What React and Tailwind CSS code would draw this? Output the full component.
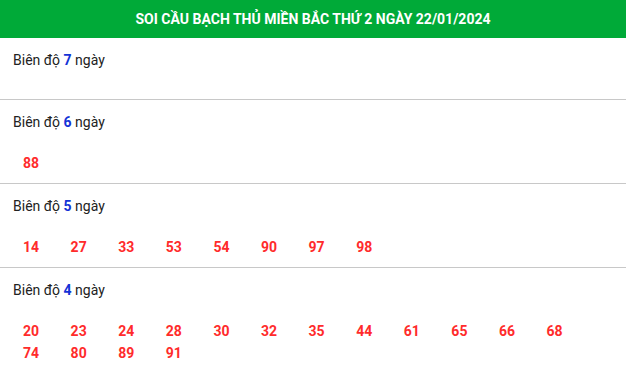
const sections = [
  { days: 7, nums: [] },
  { days: 6, nums: ['88'] },
  { days: 5, nums: ['14', '27', '33', '53', '54', '90', '97', '98'] },
  {
    days: 4,
    nums: ['20', '23', '24', '28', '30', '32', '35', '44', '61', '65', '66', '68', '74', '80', '89', '91'],
  },
];

export default function App() {
  return (
    <div className="w-[626px] bg-white font-['Roboto',sans-serif]">
      <div className="flex h-[38px] items-center justify-center bg-[#00aa38] text-[14px] font-bold text-white">
        SOI CẦU BẠCH THỦ MIỀN BẮC THỨ 2 NGÀY 22/01/2024
      </div>
      {sections.map((s) => (
        <div key={s.days} className="border-b border-[#c8c8c8] pt-3 pb-[9px]">
          <div className="h-5 pl-[13px] text-[14px] leading-5 text-[#222]">
            Biên độ <span className="font-bold text-[#1433d6]">{s.days}</span> ngày
          </div>
          <div className="mt-5 grid grid-cols-[repeat(12,47.6px)] pl-[23px]">
            {s.nums.map((n) => (
              <span key={n} className="text-[14px] font-bold leading-[22px] text-[#ff2b2b]">
                {n}
              </span>
            ))}
          </div>
        </div>
      ))}
    </div>
  );
}
